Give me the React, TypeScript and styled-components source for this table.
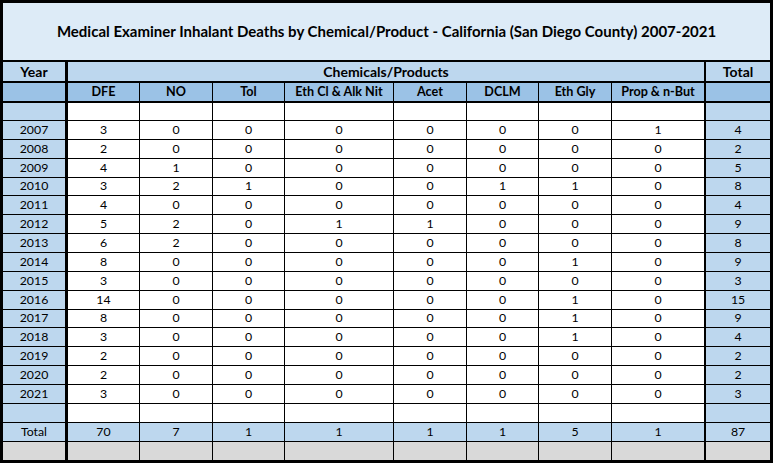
import React from "react";
import styled, { createGlobalStyle } from "styled-components";

const Global = createGlobalStyle`
  html, body { margin: 0; padding: 0; background: #ffffff; }
  * { box-sizing: border-box; }
`;

const C = {
  title: "#ddebf7",
  light: "#bdd7ee",
  mid: "#9bc2e6",
  white: "#ffffff",
  gray: "#d9d9d9",
};

const Sheet = styled.table`
  border-collapse: separate;
  border-spacing: 0;
  table-layout: fixed;
  width: 773px;
  border: 3px solid #000;
  font-family: Lato, "Open Sans", sans-serif;
  color: #000;
`;

const Cell = styled.td<{
  $bg: string;
  $rb: number;
  $bb: number;
  $h: number;
  $fs?: number;
  $bold?: boolean;
}>`
  padding: 0;
  height: ${(p) => p.$h}px;
  background: ${(p) => p.$bg};
  border-right: ${(p) => p.$rb}px solid #000;
  border-bottom: ${(p) => p.$bb}px solid #000;
  text-align: center;
  vertical-align: middle;
  white-space: nowrap;
  overflow: hidden;
  line-height: 1;
  font-size: ${(p) => p.$fs ?? 12.3}px;
  font-weight: ${(p) => (p.$bold ? 700 : 400)};
`;

const colWidths = [65, 72, 73, 72, 109, 73, 72, 73, 94, 64];
const rightBorders = [3, 1, 1, 1, 1, 1, 1, 1, 2, 0];
const chems = ["DFE", "NO", "Tol", "Eth Cl & Alk Nit", "Acet", "DCLM", "Eth Gly", "Prop & n-But"];

const data: [string, number[], number][] = [
  ["2007", [3, 0, 0, 0, 0, 0, 0, 1], 4],
  ["2008", [2, 0, 0, 0, 0, 0, 0, 0], 2],
  ["2009", [4, 1, 0, 0, 0, 0, 0, 0], 5],
  ["2010", [3, 2, 1, 0, 0, 1, 1, 0], 8],
  ["2011", [4, 0, 0, 0, 0, 0, 0, 0], 4],
  ["2012", [5, 2, 0, 1, 1, 0, 0, 0], 9],
  ["2013", [6, 2, 0, 0, 0, 0, 0, 0], 8],
  ["2014", [8, 0, 0, 0, 0, 0, 1, 0], 9],
  ["2015", [3, 0, 0, 0, 0, 0, 0, 0], 3],
  ["2016", [14, 0, 0, 0, 0, 0, 1, 0], 15],
  ["2017", [8, 0, 0, 0, 0, 0, 1, 0], 9],
  ["2018", [3, 0, 0, 0, 0, 0, 1, 0], 4],
  ["2019", [2, 0, 0, 0, 0, 0, 0, 0], 2],
  ["2020", [2, 0, 0, 0, 0, 0, 0, 0], 2],
  ["2021", [3, 0, 0, 0, 0, 0, 0, 0], 3],
];

const totals = [70, 7, 1, 1, 1, 1, 5, 1];

type RowProps = {
  cells: (string | number)[];
  h: number;
  bb: number;
  bg: (i: number) => string;
  bold?: boolean;
  fs?: number;
};

const Row = ({ cells, h, bb, bg, bold, fs }: RowProps) => (
  <tr>
    {cells.map((v, i) => (
      <Cell key={i} $bg={bg(i)} $rb={rightBorders[i]} $bb={bb} $h={h} $bold={bold} $fs={fs}>
        {v}
      </Cell>
    ))}
  </tr>
);

const edgeBlue = (i: number) => (i === 0 || i === 9 ? C.light : C.white);
const blank = Array(10).fill("");

export default function App() {
  return (
    <>
      <Global />
      <Sheet>
        <colgroup>
          {colWidths.map((w, i) => (
            <col key={i} style={{ width: w }} />
          ))}
        </colgroup>
        <tbody>
          <tr>
            <Cell colSpan={10} $bg={C.title} $rb={0} $bb={2} $h={59} $fs={15} $bold>
              Medical Examiner Inhalant Deaths by Chemical/Product - California (San Diego County) 2007-2021
            </Cell>
          </tr>
          <tr>
            <Cell $bg={C.light} $rb={3} $bb={2} $h={21} $fs={14} $bold>
              Year
            </Cell>
            <Cell colSpan={8} $bg={C.light} $rb={2} $bb={2} $h={21} $fs={14} $bold>
              Chemicals/Products
            </Cell>
            <Cell $bg={C.light} $rb={0} $bb={2} $h={21} $fs={14} $bold>
              Total
            </Cell>
          </tr>
          <Row cells={["", ...chems, ""]} h={20} bb={2} bg={() => C.mid} bold fs={12.6} />
          <Row cells={blank} h={18} bb={1} bg={edgeBlue} />
          {data.map(([y, vals, t], idx) => (
            <Row key={y} cells={[y, ...vals, t]} h={idx % 7 === 3 ? 18 : 19} bb={1} bg={edgeBlue} />
          ))}
          <Row cells={blank} h={19} bb={1} bg={edgeBlue} />
          <Row cells={["Total", ...totals, 87]} h={19} bb={1} bg={() => C.light} />
          <Row cells={blank} h={18} bb={0} bg={() => C.gray} />
        </tbody>
      </Sheet>
    </>
  );
}
